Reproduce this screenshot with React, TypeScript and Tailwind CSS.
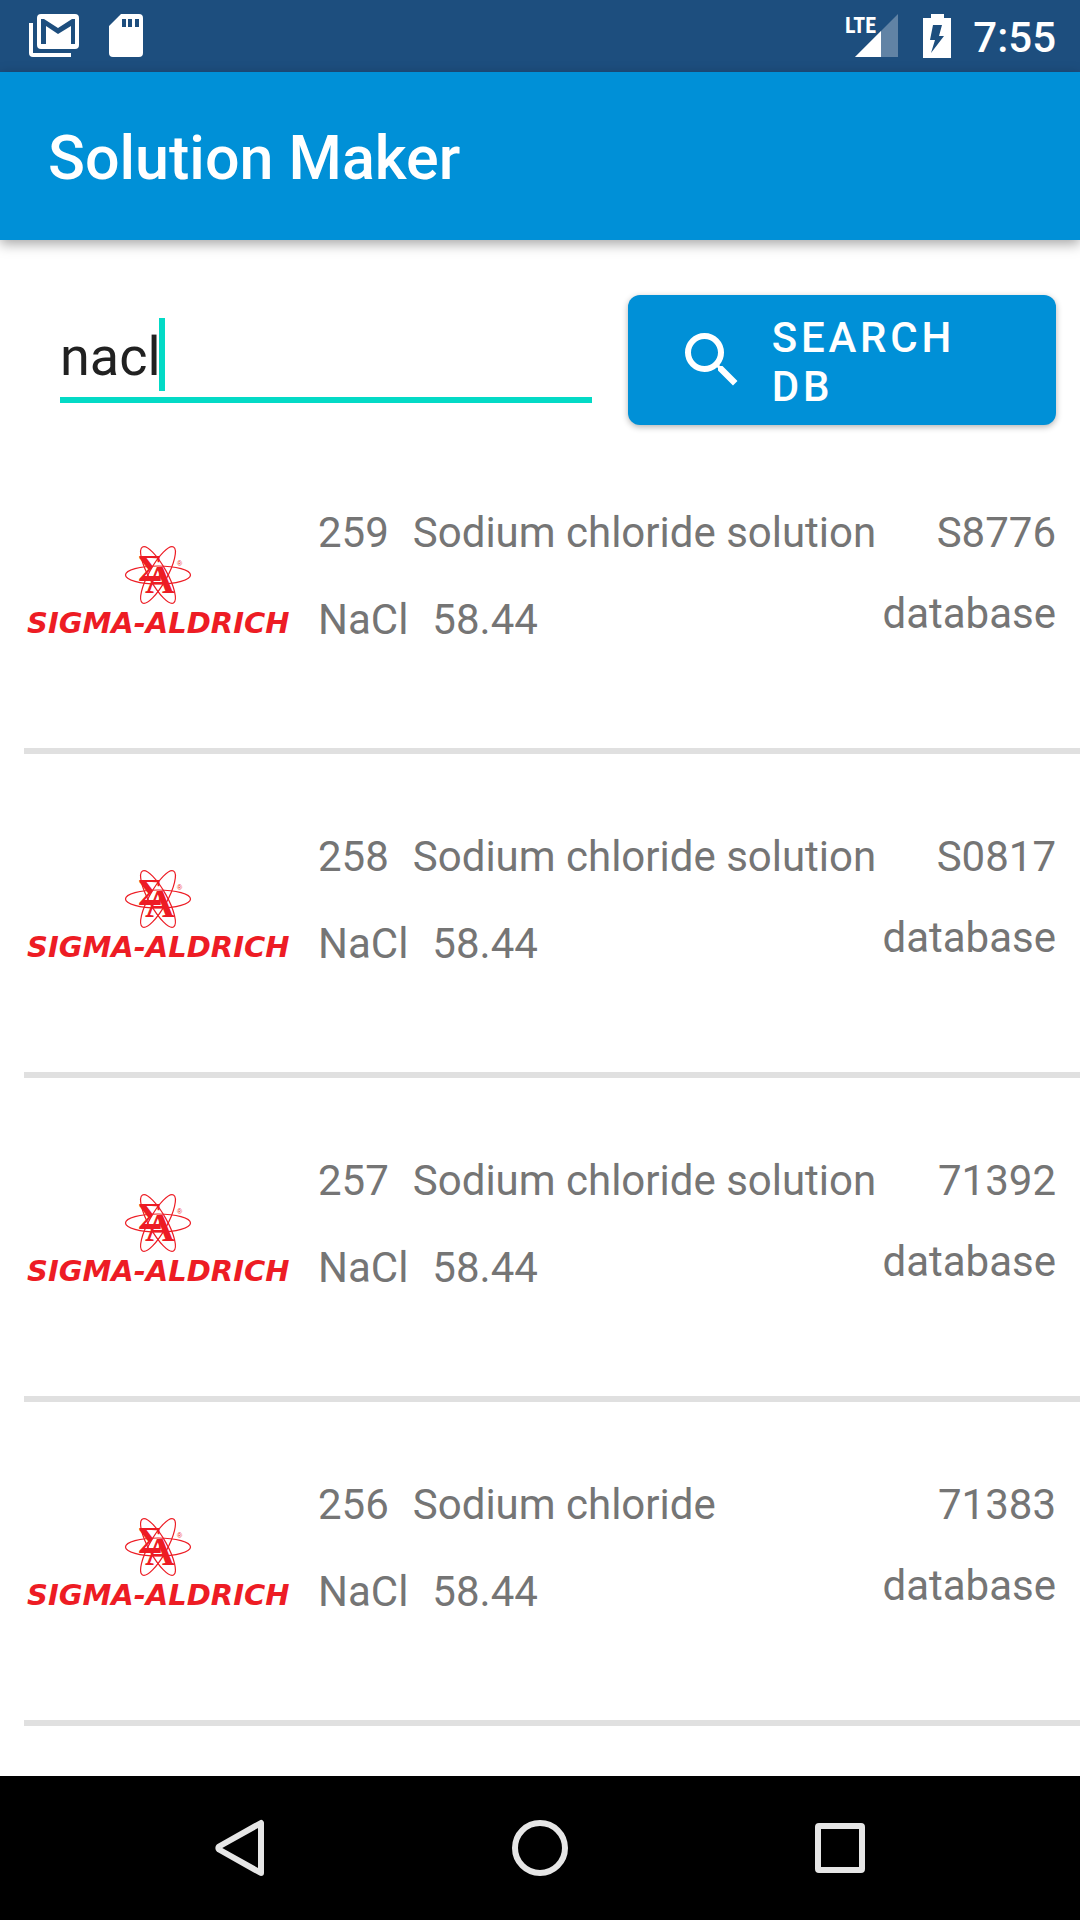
import { useState } from "react";

type Solution = {
  id: string;
  name: string;
  formula: string;
  weight: string;
  catalog: string;
  source: string;
};

const solutions: Solution[] = [
  { id: "259", name: "Sodium chloride solution", formula: "NaCl", weight: "58.44", catalog: "S8776", source: "database" },
  { id: "258", name: "Sodium chloride solution", formula: "NaCl", weight: "58.44", catalog: "S0817", source: "database" },
  { id: "257", name: "Sodium chloride solution", formula: "NaCl", weight: "58.44", catalog: "71392", source: "database" },
  { id: "256", name: "Sodium chloride", formula: "NaCl", weight: "58.44", catalog: "71383", source: "database" },
];

function MailIcon() {
  return (
    <svg width="50" height="44" viewBox="0 0 50 44" aria-label="Mail">
      <path d="M0 9h4v30h38v4H4a4 4 0 0 1-4-4z" fill="#fff" />
      <path
        fillRule="evenodd"
        d="M12 0h34a4 4 0 0 1 4 4v27a4 4 0 0 1-4 4H12a4 4 0 0 1-4-4V4a4 4 0 0 1 4-4zM12 5v25h5V12l12 8 13-8v18h4V5h-3L29 14 15 5z"
        fill="#fff"
      />
    </svg>
  );
}

function SdCardIcon() {
  return (
    <svg width="34" height="44" viewBox="0 0 34 44" aria-label="SD card">
      <path
        fillRule="evenodd"
        d="M12 0h18a4 4 0 0 1 4 4v35a4 4 0 0 1-4 4H4a4 4 0 0 1-4-4V12zM13 5v8h4V5zM19 5v8h4V5zM26 5v8h4V5z"
        fill="#fff"
      />
    </svg>
  );
}

function SignalIcon() {
  return (
    <svg width="54" height="44" viewBox="0 0 54 44" aria-label="LTE signal" className="overflow-visible">
      <path d="M53 0v43H10z" fill="#fff" fillOpacity="0.3" />
      <path d="M36 17v26H10z" fill="#fff" />
      <text x="0" y="19" fill="#fff" fontSize="22" className="font-['Liberation_Sans_Narrow','Roboto_Condensed',Roboto,sans-serif] font-bold">
        LTE
      </text>
    </svg>
  );
}

function BatteryIcon() {
  return (
    <svg width="28" height="44" viewBox="0 0 28 44" aria-label="Battery charging">
      <path
        fillRule="evenodd"
        d="M8 0h13v4h7v40H0V4h8zM10 11h9l-3 11h5L8 39l4-13H7z"
        fill="#fff"
      />
    </svg>
  );
}

function SigmaAldrichLogo() {
  return (
    <svg width="270" height="96" viewBox="0 0 270 96" role="img" aria-label="Sigma-Aldrich" className="overflow-visible">
      <g fill="none" stroke="#ed1c24" strokeWidth="1.2">
        <ellipse cx="134" cy="35" rx="32.500" ry="9" />
        <ellipse cx="134" cy="35" rx="32" ry="9" transform="rotate(61 134 35)" />
        <ellipse cx="134" cy="35" rx="32" ry="9" transform="rotate(-61 134 35)" />
      </g>
      <g fill="#ed1c24" className="font-['Liberation_Serif',serif] font-bold">
        <text x="114" y="41" fontSize="38">
          Σ
        </text>
        <text x="121" y="53" fontSize="41">
          A
        </text>
      </g>
      <text x="153" y="26" fill="#ed1c24" fontSize="7" className="font-['Liberation_Sans',sans-serif]">
        ®
      </text>
      <text x="3" y="93" fill="#ed1c24" fontSize="29" className="font-['DejaVu_Sans',sans-serif] font-bold italic">
        SIGMA-ALDRICH
      </text>
    </svg>
  );
}

function StatusBar() {
  return (
    <div className="flex h-[72px] shrink-0 items-center justify-between bg-[#1d4e7e] pr-6 pl-[29px] text-white">
      <div className="flex items-center gap-[30px]">
        <MailIcon />
        <SdCardIcon />
      </div>
      <div className="flex items-center">
        <SignalIcon />
        <div className="ml-6 flex">
          <BatteryIcon />
        </div>
        <time className="ml-[22px] pt-0.5 text-[42px] leading-[49px] font-medium">7:55</time>
      </div>
    </div>
  );
}

function SearchForm() {
  const [query, setQuery] = useState("nacl");
  return (
    <form className="flex items-start gap-9 pt-[55px] pr-6 pl-[60px]" onSubmit={(e) => e.preventDefault()}>
      <div className="relative mt-[17px] flex-1 border-b-[6px] border-[#03dac6]">
        <input
          type="text"
          aria-label="Search solutions"
          value={query}
          onChange={(e) => setQuery(e.target.value)}
          className="block h-[85px] w-full bg-transparent pt-1 text-[54px] leading-[63px] text-[#212121] caret-[#03dac6] outline-none"
        />
        <span className="pointer-events-none absolute top-[6px] left-[99px] h-[73px] w-[6px] bg-[#03dac6]" />
      </div>
      <button
        type="submit"
        className="flex h-[130px] w-[43%] shrink-0 items-center gap-6 rounded-xl bg-[#0090d7] px-12 text-left text-[42px] leading-[49px] font-medium tracking-[0.09em] text-white shadow-[0_2px_6px_rgba(0,0,0,0.3)]"
      >
        <svg width="72" height="72" viewBox="0 0 24 24" fill="#fff" className="shrink-0" aria-hidden="true">
          <path d="M15.500 14h-.79l-.28-.27A6.471 6.471 0 0 0 16 9.500 6.500 6.500 0 1 0 9.500 16c1.610 0 3.090-.59 4.230-1.570l.27.28v.79l5 4.990L20.490 19l-4.990-5zm-6 0C7.010 14 5 11.990 5 9.500S7.010 5 9.500 5 14 7.010 14 9.500 11.990 14 9.500 14z" />
        </svg>
        <span className="pt-1">SEARCH DB</span>
      </button>
    </form>
  );
}

function SolutionRow({ item }: { item: Solution }) {
  return (
    <li className="ml-6 flex h-[324px] items-start border-b-[6px] border-[#e0e0e0] pt-[78px] pr-6 text-[42px] leading-[49px] text-[#757575]">
      <div className="mt-8 shrink-0">
        <SigmaAldrichLogo />
      </div>
      <div className="ml-6 flex flex-1 flex-col gap-[38px]">
        <div className="flex gap-6">
          <span>{item.id}</span>
          <span>{item.name}</span>
        </div>
        <div className="flex gap-6">
          <span>{item.formula}</span>
          <span>{item.weight}</span>
        </div>
      </div>
      <div className="flex flex-col items-end gap-8">
        <span>{item.catalog}</span>
        <span>{item.source}</span>
      </div>
    </li>
  );
}

function NavigationBar() {
  return (
    <nav className="grid h-36 shrink-0 grid-cols-3 bg-black px-[90px]">
      <button type="button" aria-label="Back" className="flex items-center justify-center">
        <svg width="60" height="60" viewBox="0 0 60 60" fill="none" stroke="#e6e6e6" strokeWidth="6" strokeLinejoin="round">
          <path d="M51 5v50L9 31.500a2 2 0 0 1 0-3z" />
        </svg>
      </button>
      <button type="button" aria-label="Home" className="flex items-center justify-center">
        <svg width="60" height="60" viewBox="0 0 60 60" fill="none" stroke="#e6e6e6" strokeWidth="6">
          <circle cx="30" cy="30" r="25" />
        </svg>
      </button>
      <button type="button" aria-label="Recent apps" className="flex items-center justify-center">
        <svg width="60" height="60" viewBox="0 0 60 60" fill="none" stroke="#e6e6e6" strokeWidth="6">
          <rect x="8" y="8" width="44" height="44" rx="1" />
        </svg>
      </button>
    </nav>
  );
}

export default function App() {
  return (
    <div className="flex h-screen flex-col bg-white font-[Roboto,sans-serif]">
      <StatusBar />
      <header className="flex h-42 shrink-0 items-center bg-[#0090d7] px-12 text-white shadow-[0_4px_12px_rgba(0,0,0,0.35)]">
        <h1 className="pt-1 text-[61px] leading-[70px] font-medium">Solution Maker</h1>
      </header>
      <main className="min-h-0 flex-1 overflow-hidden">
        <SearchForm />
        <ul className="mt-[5px]">
          {solutions.map((item) => (
            <SolutionRow key={item.id} item={item} />
          ))}
        </ul>
      </main>
      <NavigationBar />
    </div>
  );
}
